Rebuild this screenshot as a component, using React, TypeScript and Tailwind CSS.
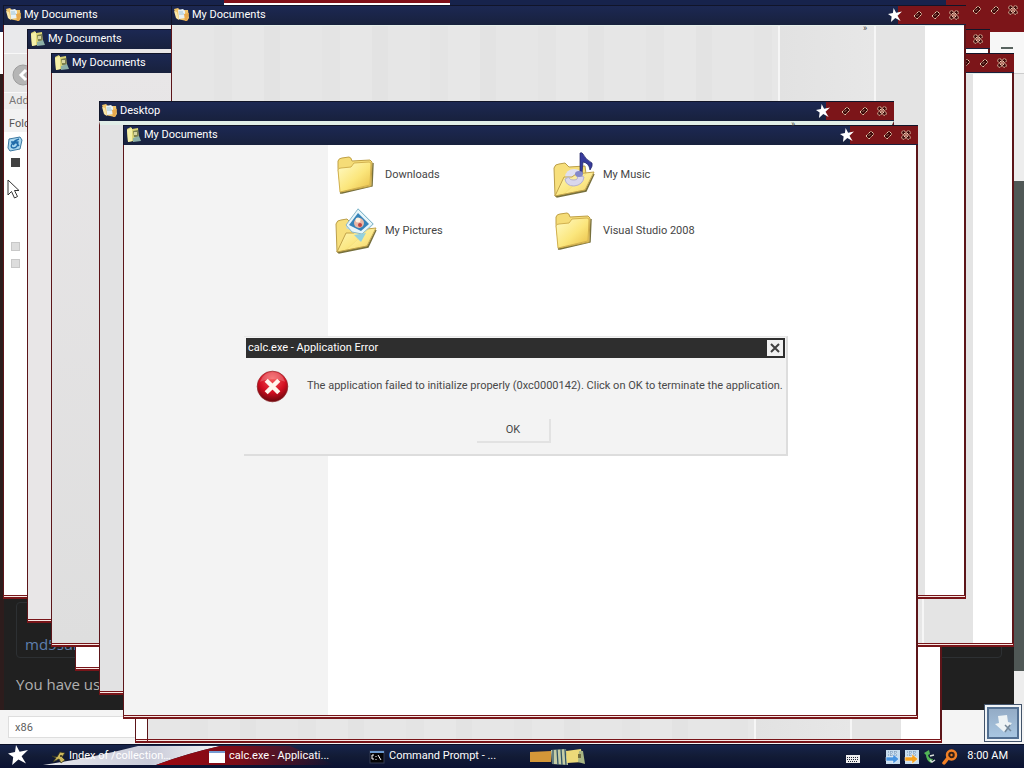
import type { ReactNode } from "react";

function Star({ className }: { className: string }) {
  return (
    <svg viewBox="0 0 20 20" className={className} aria-hidden="true">
      <path d="M8 0 L11.6 6.8 L20 5 L13.6 11.2 L18 18.5 L10.4 14.4 L4.2 20 L5.2 12 L0 8.4 L7 7 Z" fill="#fff" />
    </svg>
  );
}

function OpenFolder() {
  return (
    <svg viewBox="0 0 16 16" className="size-4 shrink-0" aria-hidden="true">
      <path d="M0 2 L4 1 L6 3 L14 3 L15 11 L13 14 L3 12 Z" fill="#efc46b" />
      <path d="M4 3 L9 2 L11 4 L11 11 L5 12 Z" fill="#e8f1f4" />
      <path d="M5 5 H9 M5 7 H10" stroke="#9ec4d6" />
      <path d="M0 4 L3 5 L5 13 L2 11 Z" fill="#fae7a7" />
      <path d="M10 7 L15 6 L13 14 L11 14 Z" fill="#e8a94c" />
    </svg>
  );
}

function DocFolder() {
  return (
    <svg viewBox="0 0 16 16" className="size-4 shrink-0" aria-hidden="true">
      <path d="M1 2 L5 0 L6 2 L12 1 L13 13 L2 15 Z" fill="#ddd676" />
      <path d="M1 3 L6 1 L6 14 L2 15 Z" fill="#f5f0a8" />
      <path d="M7 4 L12 3 L12 10 L8 10 Z" fill="#7d8150" />
      <path d="M8 5 L11 5 L11 8 L8 8 Z" fill="#d8d6a0" />
      <path d="M7 11 L13 9 L15 14 L7 15 Z" fill="#8db0a8" />
    </svg>
  );
}

function Diamond() {
  return (
    <svg viewBox="0 0 10 10" className="size-[10px]" aria-hidden="true">
      <path d="M1 6 L6 1 L9 4 L4 9 Z M4 5.5 L5.5 4" fill="#3d0808" stroke="#ecd0b4" strokeWidth="1" strokeDasharray="1.5 .6" />
    </svg>
  );
}

function CloseKnot() {
  return (
    <svg viewBox="0 0 10 10" className="size-[10px]" aria-hidden="true">
      <g fill="#3d0808" stroke="#ecd0b4" strokeWidth="1" strokeDasharray="1.6 .5">
        <circle cx="2.6" cy="2.6" r="1.9" />
        <circle cx="7.4" cy="2.6" r="1.9" />
        <circle cx="2.6" cy="7.4" r="1.9" />
        <circle cx="7.4" cy="7.4" r="1.9" />
        <path d="M3 3 L7 7 M7 3 L3 7" />
      </g>
    </svg>
  );
}

function Controls() {
  return (
    <div className="flex h-full w-[68px] shrink-0 items-center justify-end gap-2 bg-[#7c1519] pr-[7px]">
      <button type="button" aria-label="Minimize"><Diamond /></button>
      <button type="button" aria-label="Maximize"><Diamond /></button>
      <button type="button" aria-label="Close"><CloseKnot /></button>
    </div>
  );
}

type WindowProps = {
  title?: string;
  icon: ReactNode;
  place: string;
  body: string;
  children?: ReactNode;
};

function DesktopWindow({ title, icon, place, body, children }: WindowProps) {
  return (
    <section className={`absolute isolate flex h-[594px] w-[795px] flex-col overflow-hidden bg-white ${place}`}>
      <header className="flex h-5 shrink-0 items-center gap-0.5 border-t border-l border-[#111529] bg-linear-to-b from-[#1c2853] to-[#18213d] pb-px pl-0.5">
        {icon}
        {title ? <h2 className="flex-1 truncate text-[11px] leading-4 text-white">{title}</h2> : <span className="flex-1" />}
        <Star className="z-10 -mr-1.5 size-[14px] shrink-0" />
        <Controls />
      </header>
      <div className={`min-h-0 flex-1 overflow-hidden border-r-2 border-l border-[#5c1519] ${body}`}>{children}</div>
      <div className="h-1 shrink-0 border-x border-t border-b-2 border-[#781519] bg-[#f8e8e4]" />
    </section>
  );
}

function GreyPanes() {
  return (
    <div className="flex h-full border-t border-[#e6efea]">
      <div className="flex-1 bg-[repeating-linear-gradient(90deg,#e6e6e6_0px,#e6e6e6_42px,#e4e4e4_42px,#e4e4e4_60px,#e7e7e7_60px,#e7e7e7_92px,#e3e3e3_92px,#e3e3e3_108px)]" />
      <div className="w-0.5 bg-[#f6f6f6]" />
      <div className="w-[94px] bg-linear-to-r from-[#e2e2e2] to-[#e7e7e7]" />
      <div className="w-0.5 bg-[#f6f6f6]" />
      <div className="w-[49px] bg-[#e4e4e4]" />
      <div className="w-[39px] bg-white" />
    </div>
  );
}

function ClosedFolder() {
  return (
    <svg viewBox="0 0 44 48" className="h-12 w-11" aria-hidden="true">
      <defs>
        <linearGradient id="leaf" x1="0" y1="0" x2="1" y2="1">
          <stop offset="0" stopColor="#fffbc8" />
          <stop offset=".55" stopColor="#fbe67c" />
          <stop offset="1" stopColor="#e8bd45" />
        </linearGradient>
      </defs>
      <path d="M6 41 L38 34 L39 11 L38 34 L8 41 Z" fill="#77703d" stroke="#77703d" strokeWidth="1.5" />
      <path d="M4 16 L4 9 Q5 6 8 6 L15 5 Q17 5 18 9 L36 8 L38 10 L37 34 L7 40 Z" fill="#f5dc77" stroke="#c0a044" />
      <path d="M4 18 Q4 16 7 16 L17 15 L20 11 L35 10 Q37 10 37 12 L36 33 L6 40 Z" fill="url(#leaf)" stroke="#d2b14f" />
    </svg>
  );
}

function OpenBase({ children }: { children: ReactNode }) {
  return (
    <svg viewBox="0 0 44 48" className="h-12 w-11" aria-hidden="true">
      <defs>
        <linearGradient id="front" x1="0" y1="0" x2="1" y2="1">
          <stop offset="0" stopColor="#fffbc2" />
          <stop offset=".6" stopColor="#fbe57a" />
          <stop offset="1" stopColor="#edc650" />
        </linearGradient>
      </defs>
      <path d="M3 44 L2 16 Q3 12 7 12 L13 11 L17 15 L33 14 L34 22 L12 42 Z" fill="#f7df7c" stroke="#bb9f4a" />
      {children}
      <path d="M4 44 L34 38 L42 22 L34 39 L5 45 Z" fill="#77703d" stroke="#77703d" strokeWidth="1.5" />
      <path d="M3 44 L12 25 L20 25 L24 22 L42 20 L33 38 Z" fill="url(#front)" fillOpacity=".9" stroke="#c2a34a" />
    </svg>
  );
}

function MusicFolder() {
  return (
    <div className="relative">
      <OpenBase>
        <ellipse cx="22" cy="25" rx="9" ry="8" fill="#dfe0f2" />
      </OpenBase>
      <svg viewBox="0 0 44 48" className="absolute inset-0 h-12 w-11" aria-hidden="true">
        <path d="M13 27 Q14 34 22 34 Q31 33 32 25 L25 23 Q27 28 22 28 Q17 28 17 25 Z" fill="#d9d7ed" stroke="#b4b1d1" />
        <path d="M28 21 L28 1 Q30 0 31 2 Q33 7 40 11 Q41 14 38 18 Q37 11 31 10 L30 22 Z" fill="#383b9c" stroke="#202462" strokeWidth=".7" />
        <ellipse cx="27" cy="22" rx="4" ry="3" fill="#8288ca" />
      </svg>
    </div>
  );
}

function PicturesFolder() {
  return (
    <div className="relative">
      <OpenBase>
        <path d="M12 20 L24 0 L40 16 L28 28 Z" fill="#b8ddec" />
      </OpenBase>
      <svg viewBox="0 0 44 48" className="absolute inset-0 h-12 w-11" aria-hidden="true">
        <path d="M12 17 L24 1 L39 16 L28 26 L18 24 Z" fill="#e8f6fa" stroke="#8bb9ca" />
        <path d="M15 17 L24 5 L35 16 L27 23 Z" fill="#3683b9" />
        <circle cx="25" cy="15" r="5" fill="#e8b8a7" />
        <circle cx="24" cy="12" r="2.5" fill="#fff0df" />
        <circle cx="26" cy="17" r="2" fill="#c14542" />
        <path d="M20 27 L32 25 L27 34 Z" fill="#93d1df" />
      </svg>
    </div>
  );
}

function FolderLink({ name, children }: { name: string; children: ReactNode }) {
  return (
    <a href="#" className="flex h-14 items-center gap-[7px] text-[11px] text-[#454545]">
      {children}
      <span className="pb-0.5">{name}</span>
    </a>
  );
}

function ErrorDialog() {
  return (
    <section role="dialog" aria-labelledby="dialog-title" className="absolute top-[336px] left-[244px] flex h-[120px] w-[544px] flex-col border-t border-r-2 border-b-2 border-t-[#e8e8e8] border-r-[#dddddd] border-b-[#dddddd] bg-[#f3f3f3] pt-px pl-0.5">
      <header className="mr-px flex h-5 items-center justify-between bg-[#2e2e2e] px-0.5">
        <h2 id="dialog-title" className="text-[11px] text-white">calc.exe - Application Error</h2>
        <button type="button" aria-label="Close" className="grid size-4 place-items-center bg-[#f1f1f1]">
          <svg viewBox="0 0 10 10" className="size-[10px]" aria-hidden="true">
            <path d="M1 1 L9 9 M9 1 L1 9" stroke="#404040" strokeWidth="2" />
          </svg>
        </button>
      </header>
      <div className="flex items-center gap-[18px] pt-3 pl-[10px]">
        <svg viewBox="0 0 34 34" className="size-[33px] shrink-0" aria-hidden="true">
          <defs>
            <radialGradient id="alert" cx=".5" cy=".25" r=".8">
              <stop offset="0" stopColor="#f55758" />
              <stop offset=".55" stopColor="#d30e20" />
              <stop offset="1" stopColor="#560609" />
            </radialGradient>
          </defs>
          <circle cx="17" cy="17" r="15.8" fill="url(#alert)" stroke="#8d262a" strokeWidth=".7" />
          <path d="M4 12 Q8 2 17 2 Q27 2 30 12 Q17 7 4 12" fill="#fff" opacity=".22" />
          <path d="M10.5 10.5 L23.5 23.5 M23.5 10.5 L10.5 23.5" stroke="#fff7ed" strokeWidth="4.5" />
        </svg>
        <p className="text-[11px] whitespace-nowrap text-[#484848]">The application failed to initialize properly (0xc0000142). Click on OK to terminate the application.</p>
      </div>
      <button type="button" className="mt-4 mr-1 h-6 w-[74px] self-center border-r-2 border-b-2 border-[#e2e2e2] text-[11px] text-[#484848]">OK</button>
    </section>
  );
}

function Browser() {
  return (
    <div className="flex h-full flex-col bg-[#202020]">
      <header className="flex h-8 shrink-0 justify-between bg-[#17234c]">
        <div className="ml-[224px] h-[5px] w-[226px] border-b-2 border-white bg-[#811119]" />
        <div className="flex w-[78px] justify-end gap-2 bg-[#7c1519] pt-[5px] pr-[6px]">
          <Diamond />
          <Diamond />
          <CloseKnot />
        </div>
      </header>
      <div className="flex h-[42px] shrink-0 justify-end bg-white">
        <button type="button" aria-label="Menu" className="flex h-full w-[34px] justify-center border-b border-[#ccc] bg-[#f7f7f7] pt-[15px]">
          <span className="h-0.5 w-3 bg-[#58635f]" />
        </button>
      </div>
      <div className="flex min-h-0 flex-1">
        <main className="flex flex-1 flex-col justify-end border-l-4 border-[#2d1c1c] font-['Open_Sans',sans-serif] text-[15px]">
          <div className="mx-3 flex h-14 items-end rounded border border-[#2d3033] px-2 pb-0.5">
            <a href="#" className="text-[#5f7fae]">md5sum</a>
          </div>
          <p className="px-3 pt-4 pb-4 leading-5 text-[#b0b0b0]">You have used</p>
        </main>
        <div className="flex w-[10px] flex-col bg-[#ededed]">
          <div className="h-[107px]" />
          <div className="flex-1 bg-[#505856]" />
          <div className="h-[39px]" />
        </div>
      </div>
      <footer className="flex h-[34px] shrink-0 items-center bg-[#f4f4f4] pl-2">
        <input aria-label="Find" defaultValue="x86" className="h-[22px] w-[160px] border border-[#dedede] bg-white px-1.5 text-[11px] text-[#606060]" />
      </footer>
    </div>
  );
}

function SidePanel() {
  return (
    <div className="flex h-full flex-col text-[11px] leading-4 text-[#777]">
      <div className="h-7 bg-[#e9e9eb]" />
      <div className="flex h-10 items-center border-y border-[#f8f8f8] bg-[#e5e5e5] pt-1 pl-2">
        <svg viewBox="0 0 22 22" className="size-[22px]" aria-hidden="true">
          <circle cx="11" cy="11" r="10" fill="#b5b5b5" stroke="#9d9d9d" />
          <path d="M14 6 L9 11 L14 16" fill="none" stroke="white" strokeWidth="3" />
        </svg>
      </div>
      <div className="bg-[#ececec] pl-[5px]">Address</div>
      <div className="bg-[#f2f2f2] pt-[7px] pl-[5px] text-[#555]">Folders</div>
      <div className="flex flex-1 flex-col items-start bg-white pl-[3px]">
        <svg viewBox="0 0 16 16" className="mt-1 size-4" aria-hidden="true">
          <path d="M2 3 L13 1 L15 4 L13 13 L3 15 L1 12 Z" fill="#a9d7ef" stroke="#3d79a2" />
          <path d="M4 6 H11 Q11 12 6 12 Q3 11 5 8 Q8 4 12 3 M6 9 L9 6 L12 10" fill="none" stroke="#216caa" strokeWidth="1.3" />
        </svg>
        <span className="mt-1.5 ml-1 size-[9px] bg-[#414141]" />
        <svg viewBox="0 0 14 21" className="mt-3 h-[21px] w-[14px]" aria-hidden="true">
          <path d="M1 1 V16 L4.5 12.5 L7.5 19 L10.5 17.5 L7.5 11.5 H12 Z" fill="white" stroke="#333" />
        </svg>
        <div className="mt-[42px] ml-1 flex flex-col gap-2">
          <span className="h-[9px] w-[9px] border border-[#c8c8c8] bg-[#ddd]" />
          <span className="h-[9px] w-[9px] border border-[#c8c8c8] bg-[#ddd]" />
        </div>
      </div>
    </div>
  );
}

function Taskbar() {
  return (
    <footer className="relative flex h-6 shrink-0 items-center overflow-hidden border-t border-[#0b1027] bg-linear-to-b from-[#17244b] via-[#121b35] to-[#0a1132] text-[11px] text-white">
      <svg viewBox="0 0 360 24" className="absolute top-0 left-0 h-6 w-[360px]" aria-hidden="true">
        <defs>
          <linearGradient id="crimson">
            <stop offset="0" stopColor="#9d0710" />
            <stop offset=".45" stopColor="#7c0c18" />
            <stop offset="1" stopColor="#7c0c18" stopOpacity="0" />
          </linearGradient>
          <linearGradient id="silk">
            <stop offset="0" stopColor="#e7e8ee" />
            <stop offset=".6" stopColor="#c8cad8" />
            <stop offset="1" stopColor="#f6f5f7" />
          </linearGradient>
        </defs>
        <path d="M43 20 Q96 12 138 1 H220 Q185 9 156 20 Z" fill="url(#silk)" />
        <path d="M156 20 Q185 9 220 1 H290 L335 20 Z" fill="url(#crimson)" />
      </svg>
      <button type="button" aria-label="Start" className="relative ml-2 shrink-0 pb-1"><Star className="size-5" /></button>
      <nav className="relative flex min-w-0 flex-1 items-center" aria-label="Tasks">
        <button type="button" className="ml-[23px] flex w-[158px] items-center gap-0.5 text-left">
          <svg viewBox="0 0 16 16" className="size-4 shrink-0" aria-hidden="true">
            <path d="M1 7 L6 8 L9 3 L14 4 L11 8 L14 11 L10 14 L8 10 L2 13 L5 9 Z" fill="#ceb95c" stroke="#34351f" strokeWidth=".8" />
            <circle cx="10" cy="7" r="1" fill="#282918" />
          </svg>
          <span>Index of /collection…</span>
        </button>
        <button type="button" className="flex w-[160px] items-center gap-1 text-left">
          <span className="h-3 w-4 border-t-2 border-[#769bd1] bg-white" />
          <span>calc.exe - Applicati...</span>
        </button>
        <button type="button" className="flex w-[160px] items-center gap-1 text-left">
          <svg viewBox="0 0 16 14" className="h-[14px] w-4 shrink-0" aria-hidden="true">
            <rect x="1" y="1" width="14" height="12" fill="#050505" stroke="#343d55" />
            <path d="M1 2 H15" stroke="#6a99ce" strokeWidth="2" />
            <path d="M5 5 H3 V9 H5 M7 6 V7 M7 9 V10 M9 5 L12 10" fill="none" stroke="white" />
          </svg>
          <span>Command Prompt - ...</span>
        </button>
        <button type="button" aria-label="Folders">
          <svg viewBox="0 0 58 18" className="h-[18px] w-[58px]" aria-hidden="true">
            <path d="M1 4 L22 3 V14 H1 Z" fill="#d39738" />
            <path d="M22 2 L37 1 L39 17 L23 16 Z" fill="#c5cda5" />
            <path d="M24 2 L24 16 M28 1 L29 17 M32 1 L33 17 M36 1 L37 17" stroke="#315365" strokeWidth="1.3" />
            <path d="M37 3 L52 1 L54 14 L38 15 Z" fill="#ecd979" />
            <path d="M50 3 L54 3 L56 16 L49 14 Z" fill="#a8b583" />
            <path d="M49 6 H52 V10 H49 Z" fill="#716b3f" />
          </svg>
        </button>
      </nav>
      <div className="relative flex shrink-0 items-center gap-[3px] pr-4">
        <svg viewBox="0 0 14 8" className="mt-1 mr-[22px] h-2 w-[14px]" aria-label="Keyboard">
          <rect width="14" height="8" fill="#eee" />
          <path d="M1 2.5 H13 M1 4.5 H13 M2 6.5 H12" stroke="#202637" strokeDasharray="1 1" />
        </svg>
        {["#4794e1", "#f5a11e"].map((color) => (
          <svg key={color} viewBox="0 0 16 16" className="size-4" aria-hidden="true">
            <rect x="1" y="1" width="14" height="14" fill="#c7ddef" />
            <path d="M3 3 H13 M3 6 H13 M6 2 V8 M10 2 V8" stroke="#738fae" strokeDasharray="1 1" />
            <path d="M1 8 H8 V5 L14 10 L8 15 V12 H1 Z" fill={color} stroke="white" strokeWidth=".5" />
          </svg>
        ))}
        <svg viewBox="0 0 16 16" className="size-4" aria-hidden="true">
          <path d="M1 4 L6 1 L7 5 L5 6 Q6 10 10 10 L8 14 Q3 11 3 6 Z" fill="#53b656" />
          <path d="M7 7 L11 6 M7 11 L9 13 L12 11" fill="none" stroke="#d8dfdb" strokeWidth="1.5" />
        </svg>
        <svg viewBox="0 0 16 16" className="size-4" aria-hidden="true">
          <circle cx="9.5" cy="6" r="4.5" fill="#352016" stroke="#f18026" strokeWidth="2.5" />
          <path d="M6 9 L2 14" stroke="#f18026" strokeWidth="3.5" strokeLinecap="round" />
          <circle cx="9.5" cy="6" r="1.2" fill="#f18026" />
        </svg>
        <time className="ml-1.5 whitespace-nowrap">8:00 AM</time>
      </div>
    </footer>
  );
}

export default function App() {
  return (
    <div className="flex h-screen flex-col overflow-hidden bg-[#202020] font-['Roboto','DejaVu_Sans',sans-serif]">
      <div className="relative min-h-0 flex-1 overflow-hidden">
        <Browser />
        <DesktopWindow icon={<DocFolder />} place="top-[149px] left-[135px]" body="bg-white" />
        <DesktopWindow icon={<DocFolder />} place="top-[149px] left-[147px]" body="bg-white"><GreyPanes /></DesktopWindow>
        <DesktopWindow icon={<DocFolder />} place="top-[77px] left-[75px]" body="bg-white" />
        <DesktopWindow title="My Documents" icon={<OpenFolder />} place="top-[5px] left-[3px]" body="bg-white"><SidePanel /></DesktopWindow>
        <DesktopWindow title="My Documents" icon={<DocFolder />} place="top-[29px] left-[27px]" body="bg-[#e8e6e7]" />
        <DesktopWindow icon={<DocFolder />} place="top-[29px] left-[195px]" body="bg-white" />
        <DesktopWindow icon={<DocFolder />} place="top-[53px] left-[219px]" body="bg-white"><GreyPanes /></DesktopWindow>
        <DesktopWindow title="My Documents" icon={<DocFolder />} place="top-[53px] left-[51px]" body="bg-linear-to-b from-[#e8e6e7] to-[#dedede]" />
        <DesktopWindow title="My Documents" icon={<OpenFolder />} place="top-[5px] left-[171px]" body="bg-white"><GreyPanes /></DesktopWindow>
        <DesktopWindow title="Desktop" icon={<OpenFolder />} place="top-[101px] left-[99px]" body="border-t-4 border-t-[#e1eee8] bg-[#e2e2e3]" />
        <DesktopWindow title="My Documents" icon={<DocFolder />} place="top-[125px] left-[123px]" body="bg-white">
          <div className="flex h-full">
            <aside className="w-[204px] shrink-0 bg-[#f3f3f3]" />
            <div className="grid flex-1 grid-cols-[218px_218px] content-start pt-[3px] pl-[6px]">
              <FolderLink name="Downloads"><ClosedFolder /></FolderLink>
              <FolderLink name="My Music"><MusicFolder /></FolderLink>
              <FolderLink name="My Pictures"><PicturesFolder /></FolderLink>
              <FolderLink name="Visual Studio 2008"><ClosedFolder /></FolderLink>
            </div>
          </div>
        </DesktopWindow>
        <span className="absolute top-[24px] left-[863px] text-[9px] leading-[8px] text-[#444]">»</span>
        <span className="absolute top-[120px] left-[791px] text-[9px] leading-[8px] text-[#444]">»</span>
        <ErrorDialog />
        <button type="button" aria-label="Download" className="absolute right-0.5 bottom-0.5 grid size-[38px] place-items-center border border-[#42536a] bg-[#f0f4f7]">
          <svg viewBox="0 0 32 32" className="size-8" aria-hidden="true">
            <defs>
              <linearGradient id="steel" x1="0" y1="0" x2="0" y2="1">
                <stop offset="0" stopColor="#93abc5" />
                <stop offset="1" stopColor="#a9c7e2" />
              </linearGradient>
            </defs>
            <rect x="1" y="1" width="30" height="30" fill="url(#steel)" stroke="#526f91" strokeWidth="2" />
            <path d="M11 9 L20 8 L21 15 L25 16 L17 25 L8 17 L12 16 Z" fill="#edf3f5" />
            <path d="M18 18 L24 24 M23 18 L18 25" stroke="#748899" strokeWidth="1.5" />
          </svg>
        </button>
      </div>
      <Taskbar />
    </div>
  );
}
